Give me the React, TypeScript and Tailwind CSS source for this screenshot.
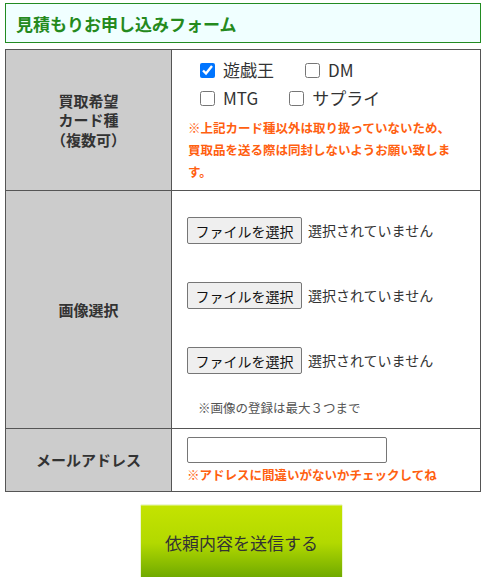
import React from "react";

const font = { fontFamily: '"Noto Sans CJK JP", "Noto Sans", sans-serif' };

const CardOption = ({ label, checked }: { label: string; checked?: boolean }) => (
  <label className="flex items-center gap-[8px]">
    <input
      type="checkbox"
      defaultChecked={checked}
      className="w-[15px] h-[15px] m-0 accent-[#0075ff]"
    />
    <span className="text-[17px] text-[#333]">{label}</span>
  </label>
);

const FilePicker = () => (
  <div className="flex items-center gap-[6px]">
    <button
      type="button"
      className="h-[27px] w-[115px] border border-[#767676] rounded-[2px] bg-[#efefef] text-[14px] text-[#111] leading-none"
    >
      ファイルを選択
    </button>
    <span className="text-[14px] text-[#333]">選択されていません</span>
  </div>
);

const RowLabel = ({ children }: { children: React.ReactNode }) => (
  <div className="w-[166px] shrink-0 bg-[#cccccc] border-r border-[#555] flex items-center justify-center text-center text-[15px] font-bold text-[#333] leading-[19.5px]">
    {children}
  </div>
);

export default function App() {
  return (
    <div className="w-[483px] bg-white pt-[3px] pb-[20px]" style={font}>
      <div className="ml-[5px] w-[476px] h-[40px] border border-[#228b22] bg-[#f0ffff] flex items-center px-[10px]">
        <h1 className="text-[17px] font-bold text-[#258a1d] leading-none">見積もりお申し込みフォーム</h1>
      </div>

      <div className="ml-[5px] mt-[6px] w-[476px] border border-[#555]">
        <div className="flex h-[140px]">
          <RowLabel>
            <div>
              買取希望
              <br />
              カード種
              <br />
              （複数可）
            </div>
          </RowLabel>
          <div className="flex-1 pl-[16px] pr-[10px] pt-[6px]">
            <div className="ml-[12px]">
              <div className="flex items-center gap-x-[31px] h-[28px]">
                <CardOption label="遊戯王" checked />
                <CardOption label="DM" />
              </div>
              <div className="flex items-center gap-x-[31px] h-[28px]">
                <CardOption label="MTG" />
                <CardOption label="サプライ" />
              </div>
            </div>
            <p className="mt-[5px] w-[270px] text-[12.5px] font-bold text-[#ff6010] leading-[22px]">
              ※上記カード種以外は取り扱っていないため、買取品を送る際は同封しないようお願い致します。
            </p>
          </div>
        </div>

        <div className="flex h-[238px] border-t border-[#555]">
          <RowLabel>画像選択</RowLabel>
          <div className="flex-1 pl-[15px] pt-[26px] flex flex-col">
            <div className="flex flex-col gap-[38px]">
              <FilePicker />
              <FilePicker />
              <FilePicker />
            </div>
            <p className="mt-[24px] pl-[11px] text-[12.5px] text-[#555] leading-[20px]">
              ※画像の登録は最大３つまで
            </p>
          </div>
        </div>

        <div className="flex h-[63px] border-t border-[#555]">
          <RowLabel>メールアドレス</RowLabel>
          <div className="flex-1 pl-[15px] pt-[8px]">
            <input
              type="text"
              className="block w-[200px] h-[26px] border border-[#767676] rounded-[2px] bg-white px-[4px] text-[14px]"
            />
            <p className="mt-[2px] text-[12.5px] font-bold text-[#ff6010] leading-[20px]">
              ※アドレスに間違いがないかチェックしてね
            </p>
          </div>
        </div>
      </div>

      <div className="mt-[13px] flex justify-center">
        <button
          type="button"
          className="w-[201px] h-[75px] border-t border-[#d6ee5a] bg-linear-to-b from-[#c4e300] via-[#b2d900] to-[#6aa600] text-[17px] text-[#333] shadow-[0_0_1px_#9cc800]"
        >
          依頼内容を送信する
        </button>
      </div>
    </div>
  );
}
